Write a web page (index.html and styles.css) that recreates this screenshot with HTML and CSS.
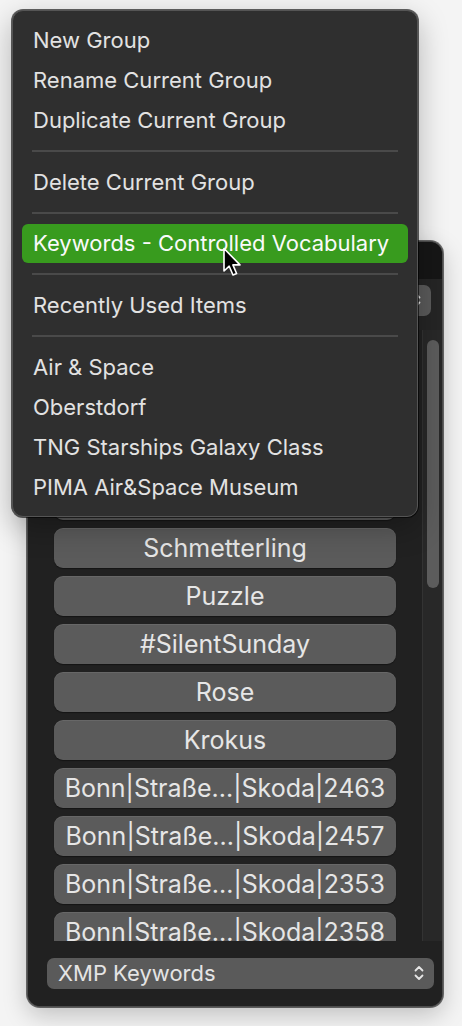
FILE: index.html
```html
<!DOCTYPE html>
<html>
<head>
<meta charset="utf-8">
<link rel="stylesheet" href="styles.css">
</head>
<body>
<div class="panel">
  <div class="titlebar"></div>
  <div class="toolbar">
    <div class="popup top-popup">
      <span class="popup-label"></span>
      <svg class="chev" width="10" height="16" viewBox="0 0 10 16"><path d="M1.5 5.5 L5 2 L8.5 5.5 M1.5 10.5 L5 14 L8.5 10.5" fill="none" stroke="#e6e6e6" stroke-width="1.8" stroke-linecap="round" stroke-linejoin="round"/></svg>
    </div>
  </div>
  <div class="scrollview">
    <div class="content">
      <div class="kw"></div>
      <div class="kw"></div>
      <div class="kw"></div>
      <div class="kw"></div>
      <div class="kw">Schmetterling</div>
      <div class="kw">Puzzle</div>
      <div class="kw">#SilentSunday</div>
      <div class="kw">Rose</div>
      <div class="kw">Krokus</div>
      <div class="kw">Bonn|Straße...|Skoda|2463</div>
      <div class="kw">Bonn|Straße...|Skoda|2457</div>
      <div class="kw">Bonn|Straße...|Skoda|2353</div>
      <div class="kw">Bonn|Straße...|Skoda|2358</div>
    </div>
    <div class="track"><div class="thumb"></div></div>
  </div>
  <div class="footer">
    <div class="popup bottom-popup">
      <span class="popup-label">XMP Keywords</span>
      <svg class="chev" width="10" height="16" viewBox="0 0 10 16"><path d="M1.5 5.5 L5 2 L8.5 5.5 M1.5 10.5 L5 14 L8.5 10.5" fill="none" stroke="#e6e6e6" stroke-width="1.8" stroke-linecap="round" stroke-linejoin="round"/></svg>
    </div>
  </div>
</div>

<div class="menu">
  <div class="item">New Group</div>
  <div class="item">Rename Current Group</div>
  <div class="item">Duplicate Current Group</div>
  <div class="sep"></div>
  <div class="item">Delete Current Group</div>
  <div class="sep"></div>
  <div class="item selected">Keywords - Controlled Vocabulary</div>
  <div class="sep"></div>
  <div class="item">Recently Used Items</div>
  <div class="sep"></div>
  <div class="item">Air &amp; Space</div>
  <div class="item">Oberstdorf</div>
  <div class="item">TNG Starships Galaxy Class</div>
  <div class="item">PIMA Air&amp;Space Museum</div>
</div>

<svg class="cursor" width="22" height="32" viewBox="0 0 22 32"><path d="M2 1.5 L2 24 L7.2 19.2 L11 28 L14.6 26.5 L10.9 17.9 L18 17.9 Z" fill="#000" stroke="#fff" stroke-width="1.6" stroke-linejoin="round"/></svg>
</body>
</html>
```

FILE: styles.css
```css
html, body {
  margin: 0;
  padding: 0;
}
body {
  width: 462px;
  height: 1026px;
  overflow: hidden;
  position: relative;
  background: #f4f4f4;
  font-family: "Inter", "Noto Sans", sans-serif;
  -webkit-font-smoothing: antialiased;
}

/* underlying panel (a window on the desktop) */
.panel {
  position: absolute;
  left: 27px;
  top: 241px;
  width: 416px;
  height: 766px;
  box-sizing: border-box;
  border: 1px solid #4d4d4d;
  border-radius: 13px;
  background: #212121;
  overflow: hidden;
  display: flex;
  flex-direction: column;
  box-shadow: 0 0 0 1px rgba(0,0,0,0.55), 0 8px 24px rgba(0,0,0,0.22);
}
.titlebar {
  height: 37px;
  flex: none;
  background: #161616;
}
.toolbar {
  height: 51px;
  flex: none;
  background: #252525;
  display: flex;
  align-items: center;
  justify-content: flex-end;
  padding: 0 11px 0 20px;
  box-sizing: border-box;
}
.popup {
  background: #5a5a5a;
  border-radius: 7px;
  display: flex;
  align-items: center;
  justify-content: space-between;
  box-sizing: border-box;
  color: #e4e4e4;
  font-size: 22px;
}
.top-popup {
  width: 380px;
  height: 31px;
  padding: 0 10px 0 12px;
  margin-top: -9px;
}
.scrollview {
  flex: 1;
  display: flex;
  background: #212121;
  min-height: 0;
}
.content {
  flex: 1;
  overflow: hidden;
  padding: 6px 26px 0 26px;
  display: flex;
  flex-direction: column;
  gap: 8px;
}
.kw {
  flex: none;
  height: 40px;
  border-radius: 9px;
  background: #5b5b5b;
  box-shadow: inset 0 1px 0 rgba(255,255,255,0.08), 0 1px 1px rgba(0,0,0,0.4);
  color: #e6e6e6;
  font-size: 25px;
  display: flex;
  align-items: center;
  justify-content: center;
  white-space: nowrap;
}
.track {
  width: 20px;
  flex: none;
  background: #282828;
  border-left: 1px solid #333;
  box-sizing: border-box;
  padding: 10px 3px 0 4px;
}
.thumb {
  height: 248px;
  border-radius: 6px;
  background: #5c5c5c;
}
.footer {
  height: 65px;
  flex: none;
  background: #212121;
  display: flex;
  align-items: center;
  padding: 0 8px 0 19px;
  box-sizing: border-box;
}
.bottom-popup {
  width: 100%;
  height: 31px;
  padding: 0 10px 0 11px;
  margin-top: -1px;
}

/* context menu over the panel */
.menu {
  position: absolute;
  left: 12px;
  top: 10px;
  width: 406px;
  box-sizing: border-box;
  padding: 9px 0 9px 0;
  background: #2f2f2f;
  border: 1px solid #555;
  border-radius: 11px;
  box-shadow: 0 0 0 1px rgba(0,0,0,0.6), 0 10px 30px rgba(0,0,0,0.28);
  color: #e2e2e2;
  font-size: 22px;
}
.item {
  height: 40px;
  line-height: 40px;
  padding: 0 11px;
  margin: 0 9px;
  border-radius: 6px;
  white-space: nowrap;
}
.item.selected {
  background: #389b1e;
  color: #fafafa;
  height: 39px;
  line-height: 39px;
  margin-bottom: 1px;
}
.sep {
  height: 2px;
  margin: 10px 19px;
  background: #4a4a4a;
}

.cursor {
  position: absolute;
  left: 222px;
  top: 247px;
}
```
